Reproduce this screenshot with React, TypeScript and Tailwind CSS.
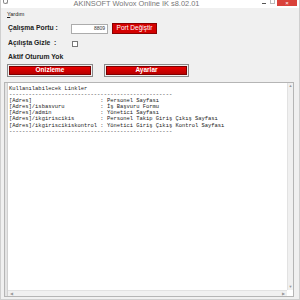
import React from 'react'

const dashes = '-'.repeat(50)

const lines = [
  'Kullanılabilecek Linkler',
  dashes,
  '[Adres]                     : Personel Sayfası',
  '[Adres]/isbasvuru           : İş Başvuru Formu',
  '[Adres]/admin               : Yönetici Sayfası',
  '[Adres]/ikgiriscikis        : Personel Takip Giriş Çıkış Sayfası',
  '[Adres]/ikgiriscikiskontrol : Yönetici Giriş Çıkış Kontrol Sayfası',
  dashes,
]

function RedButton({ label, className }: { label: string; className: string }) {
  return (
    <div className={`shrink-0 border border-[#8a8a8a] p-[1px] ${className}`}>
      <div className="h-full bg-gradient-to-b from-[#e80000] to-[#b80000] border border-[#7a0000] flex items-center justify-center text-white font-bold text-[6.5px] leading-none">
        {label}
      </div>
    </div>
  )
}

export default function App() {
  return (
    <div
      className="w-[300px] h-[300px] bg-[#f0f0f0] overflow-hidden flex flex-col border-x border-[#cfcfcf] border-b"
      style={{ fontFamily: '"Liberation Sans", Arial, sans-serif' }}
    >
      {/* title bar */}
      <div className="shrink-0 h-[8px] bg-white flex items-start relative">
        <div className="ml-[2px] w-[5px] h-[4px] rounded-b-full border border-t-0 border-[#888]" />
        <div className="flex-1 text-center text-[7.4px] text-[#777] leading-[7px] pl-[6px]">
          AKINSOFT Wolvox Online IK s8.02.01
        </div>
        <div className="flex items-start h-full">
          <div className="w-[9px] h-[6px] flex items-center justify-center">
            <div className="w-[4px] h-[1px] bg-[#555]" />
          </div>
          <div className="w-[9px] h-[6px] flex items-start justify-center">
            <div className="w-[5px] h-[4px] border border-t-0 border-[#bbb]" />
          </div>
          <div className="w-[20px] h-[6px] bg-[#d9413a] flex items-center justify-center text-white text-[6px] leading-none mr-[2px]">
            ×
          </div>
        </div>
      </div>

      {/* menu */}
      <div className="shrink-0 h-[11px] flex items-center pl-[6px] text-[5.5px] text-[#222] pt-[2px]">
        <span>
          <span className="underline">Y</span>ardım
        </span>
      </div>

      {/* port row */}
      <div className="shrink-0 mt-[4px] h-[11px] flex items-center pl-[7px]">
        <span className="w-[63px] text-[6.8px] font-bold text-[#222]">Çalışma Portu :</span>
        <div className="w-[37px] h-[10px] bg-white border border-[#acacac] flex items-center justify-end pr-[2px] text-[5px] text-[#333]">
          8809
        </div>
        <div className="ml-[4px] w-[45px] h-[11px] bg-[#d40000] border border-[#8a0000] flex items-center justify-center text-white text-[6.5px] leading-none">
          Port Değiştir
        </div>
      </div>

      {/* hide row */}
      <div className="shrink-0 mt-[6px] h-[7px] flex items-center pl-[7px]">
        <span className="w-[64px] text-[6.8px] font-bold text-[#222]">Açılışta Gizle&nbsp;&nbsp;:</span>
        <div className="w-[6px] h-[6px] bg-white border border-[#777]" />
      </div>

      <div className="shrink-0 mt-[6px] h-[8px] flex items-center pl-[7px] text-[6.8px] font-bold text-[#222]">
        Aktif Oturum Yok
      </div>

      {/* buttons */}
      <div className="shrink-0 mt-[3px] flex pl-[6px] gap-[11px]">
        <RedButton label="Önizleme" className="w-[86px] h-[13px]" />
        <RedButton label="Ayarlar" className="w-[85px] h-[13px]" />
      </div>

      {/* text area */}
      <div className="mt-[5px] ml-[3px] mr-[5px] flex-1 min-h-0 mb-[2px] border border-[#b5b5b5] bg-white flex">
        <div className="w-[3px] bg-[#e4e4e4] border-r border-[#d0d0d0]" />
        <div className="flex-1 flex flex-col">
          <div className="flex-1 flex min-h-0">
            <pre
              className="flex-1 pl-[1px] pt-[3px] text-[5.45px] leading-[6.1px] text-[#222] whitespace-pre overflow-hidden"
              style={{ fontFamily: '"Liberation Mono", "Courier New", monospace' }}
            >
              {lines.join('\n')}
            </pre>
            <div className="w-[6px] bg-[#f0f0f0] border-l border-[#e2e2e2] flex flex-col justify-between items-center text-[4px] text-[#999] leading-none py-[1px]">
              <span>▲</span>
              <span>▼</span>
            </div>
          </div>
          <div className="h-[6px] bg-[#f0f0f0] border-t border-[#e2e2e2] flex justify-between items-center text-[4px] text-[#999] leading-none px-[2px] mr-[6px]">
            <span>◀</span>
            <span>▶</span>
          </div>
        </div>
      </div>
    </div>
  )
}
